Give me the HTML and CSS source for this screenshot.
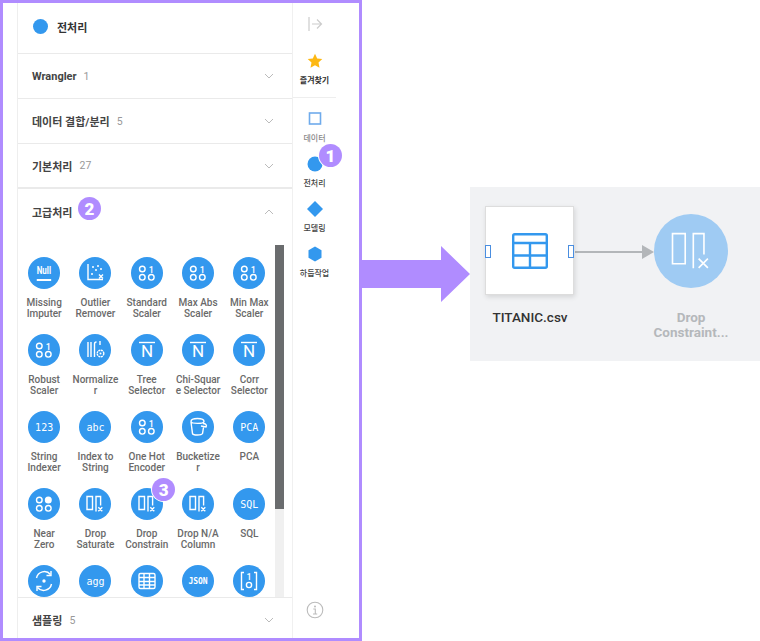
FILE: index.html
```html
<!DOCTYPE html>
<html lang="ko">

<head>
    <meta charset="UTF-8">
    <meta name="viewport" content="width=device-width, initial-scale=1.0">
    <title>전처리</title>
    <link rel="stylesheet" href="styles.css">
</head>

<body>
    <!-- icon set -->
    <svg class="defs" aria-hidden="true">
        <symbol id="bin" viewBox="0 0 32 32">
            <g class="ln"><circle cx="11.300" cy="12" r="2.800"/><circle cx="11.300" cy="20.300" r="2.800"/><circle cx="20.300" cy="20.300" r="2.800"/></g>
            <text x="20.300" y="15.500" class="gl">1</text>
        </symbol>
        <symbol id="near" viewBox="0 0 32 32">
            <g class="ln"><circle cx="11.300" cy="20.300" r="2.800"/><circle cx="20.300" cy="20.300" r="2.800"/><circle cx="11.300" cy="12" r="2.800"/></g>
            <circle cx="20.300" cy="12" r="3.500" fill="#fff"/>
        </symbol>
        <symbol id="outlier" viewBox="0 0 32 32">
            <path class="ln" d="M9 7v15.500h15"/>
            <g fill="#fff"><circle cx="14" cy="10" r="1"/><circle cx="19" cy="9" r="1"/><circle cx="17" cy="13" r="1"/><circle cx="22" cy="12" r="1"/><circle cx="13" cy="17" r="1"/></g>
            <path class="ln" d="M20 17.500l4 4m0-4l-4 4"/>
        </symbol>
        <symbol id="normal" viewBox="0 0 32 32">
            <path class="ln" d="M9 8v15M12 8v15M15.500 23V10a2 2 0 0 1 2-2M21 7v4"/>
            <circle class="ln" cx="21.500" cy="19.500" r="3.300" stroke-dasharray="2 .6"/>
            <circle cx="21.500" cy="19.500" r="1" fill="#fff"/>
        </symbol>
        <symbol id="over" viewBox="0 0 32 32">
            <path class="ln" d="M8 8.500h16"/>
            <text x="16" y="23" class="gl big">N</text>
        </symbol>
        <symbol id="bucket" viewBox="0 0 32 32">
            <path class="ln" d="M9 10.500c0-4 13-4 13 0 0 2.500-13 2.500-13 0zM9 11l1.500 11.500c.5 2 9 2 10 0l1-6M21 12.500c3 0 4 2 3 3.500l-5-1"/>
        </symbol>
        <symbol id="drop" viewBox="0 0 32 32">
            <path class="ln" d="M8 8.500h5.500v13H8zM17 23.500V8.500h4.600v9"/>
            <path class="ln" d="M19.300 19.300l4 4m0-4l-4 4"/>
        </symbol>
        <symbol id="sync" viewBox="0 0 32 32">
            <path class="ln" d="M8.500 13a8 8 0 0 1 14-3.500M23.500 19a8 8 0 0 1-14 3.500"/>
            <path class="ln" d="M23 6v4.500h-4.500M9 26v-4.500h4.500"/>
            <circle cx="16" cy="16" r="1.700" fill="#fff"/>
        </symbol>
        <symbol id="sheet" viewBox="0 0 32 32">
            <rect class="ln" x="8" y="8.500" width="16" height="15" rx="1.500"/>
            <path class="ln" d="M8 12.500h16M8 16.500h16M8 20h16M13 8.500v15M18.500 8.500v15"/>
        </symbol>
        <symbol id="bracket" viewBox="0 0 32 32">
            <path class="ln" d="M11 7.500H8.500v17H11M21 7.500h2.500v17H21"/>
            <text x="16" y="15" class="gl">1</text>
            <circle class="ln" cx="16" cy="20" r="2.600"/>
        </symbol>
    </svg>

    <div class="page">
        <div class="frame">
            <div class="panel">
                <div class="panel-head">
                    <span class="dot"></span>
                    <span class="head-title">전처리</span>
                </div>

                <div class="section">
                    <span class="sec-title">Wrangler</span><span class="sec-count">1</span>
                    <svg class="chev" viewBox="0 0 10 6"><path d="M1 1l4 4 4-4"/></svg>
                </div>
                <div class="section">
                    <span class="sec-title">데이터 결합/분리</span><span class="sec-count">5</span>
                    <svg class="chev" viewBox="0 0 10 6"><path d="M1 1l4 4 4-4"/></svg>
                </div>
                <div class="section thick">
                    <span class="sec-title">기본처리</span><span class="sec-count">27</span>
                    <svg class="chev" viewBox="0 0 10 6"><path d="M1 1l4 4 4-4"/></svg>
                </div>
                <div class="section open">
                    <span class="sec-title">고급처리</span>
                    <span class="badge badge-two">2</span>
                    <svg class="chev" viewBox="0 0 10 6"><path d="M1 5l4-4 4 4"/></svg>
                </div>

                <div class="tool-scroll">
                    <div class="tool-grid">
                        <div class="tool"><span class="tool-ico"><span class="null-txt">Null</span></span><span class="tool-name">Missing<br>Imputer</span></div>
                        <div class="tool"><span class="tool-ico"><svg><use href="#outlier"/></svg></span><span class="tool-name">Outlier<br>Remover</span></div>
                        <div class="tool"><span class="tool-ico"><svg><use href="#bin"/></svg></span><span class="tool-name">Standard<br>Scaler</span></div>
                        <div class="tool"><span class="tool-ico"><svg><use href="#bin"/></svg></span><span class="tool-name">Max Abs<br>Scaler</span></div>
                        <div class="tool"><span class="tool-ico"><svg><use href="#bin"/></svg></span><span class="tool-name">Min Max<br>Scaler</span></div>

                        <div class="tool"><span class="tool-ico"><svg><use href="#bin"/></svg></span><span class="tool-name">Robust<br>Scaler</span></div>
                        <div class="tool"><span class="tool-ico"><svg><use href="#normal"/></svg></span><span class="tool-name">Normalize<br>r</span></div>
                        <div class="tool"><span class="tool-ico"><svg><use href="#over"/></svg></span><span class="tool-name">Tree<br>Selector</span></div>
                        <div class="tool"><span class="tool-ico"><svg><use href="#over"/></svg></span><span class="tool-name">Chi-Squar<br>e Selector</span></div>
                        <div class="tool"><span class="tool-ico"><svg><use href="#over"/></svg></span><span class="tool-name">Corr<br>Selector</span></div>

                        <div class="tool"><span class="tool-ico mono">123</span><span class="tool-name">String<br>Indexer</span></div>
                        <div class="tool"><span class="tool-ico mono">abc</span><span class="tool-name">Index to<br>String</span></div>
                        <div class="tool"><span class="tool-ico"><svg><use href="#bin"/></svg></span><span class="tool-name">One Hot<br>Encoder</span></div>
                        <div class="tool"><span class="tool-ico"><svg><use href="#bucket"/></svg></span><span class="tool-name">Bucketize<br>r</span></div>
                        <div class="tool"><span class="tool-ico mono">PCA</span><span class="tool-name">PCA</span></div>

                        <div class="tool"><span class="tool-ico"><svg><use href="#near"/></svg></span><span class="tool-name">Near<br>Zero</span></div>
                        <div class="tool"><span class="tool-ico"><svg><use href="#drop"/></svg></span><span class="tool-name">Drop<br>Saturate</span></div>
                        <div class="tool"><span class="tool-ico"><svg><use href="#drop"/></svg></span><span class="tool-name">Drop<br>Constrain</span><span class="badge badge-three">3</span></div>
                        <div class="tool"><span class="tool-ico"><svg><use href="#drop"/></svg></span><span class="tool-name">Drop N/A<br>Column</span></div>
                        <div class="tool"><span class="tool-ico mono">SQL</span><span class="tool-name">SQL</span></div>

                        <div class="tool"><span class="tool-ico"><svg><use href="#sync"/></svg></span></div>
                        <div class="tool"><span class="tool-ico mono">agg</span></div>
                        <div class="tool"><span class="tool-ico"><svg><use href="#sheet"/></svg></span></div>
                        <div class="tool"><span class="tool-ico mono small">JSON</span></div>
                        <div class="tool"><span class="tool-ico"><svg><use href="#bracket"/></svg></span></div>
                    </div>
                    <div class="scrollbar"><div class="thumb"></div></div>
                </div>

                <div class="section last">
                    <span class="sec-title">샘플링</span><span class="sec-count">5</span>
                    <svg class="chev" viewBox="0 0 10 6"><path d="M1 1l4 4 4-4"/></svg>
                </div>
            </div>

            <div class="rail">
                <svg class="rail-toggle" viewBox="0 0 16 16"><path d="M2 1v14M5 8h9.500M10 3.500L14.500 8 10 12.500"/></svg>

                <div class="rail-item fav">
                    <svg class="rail-ico" viewBox="0 0 16 16"><path fill="#fdb813" d="M8 .8l2.200 4.700 5.100.6-3.800 3.500 1 5.100L8 12.200l-4.500 2.500 1-5.100L.7 6.100l5.100-.6z"/></svg>
                    <span class="rail-name strong">즐겨찾기</span>
                </div>
                <div class="rail-item">
                    <svg class="rail-ico" viewBox="0 0 16 16"><rect x="2.500" y="2" width="11" height="11" fill="none" stroke="#6fabec" stroke-width="1.600"/></svg>
                    <span class="rail-name dim">데이터</span>
                </div>
                <div class="rail-item">
                    <svg class="rail-ico" viewBox="0 0 16 16"><circle cx="8" cy="8" r="7.500" fill="#3398ee"/></svg>
                    <span class="rail-name">전처리</span>
                    <span class="badge badge-one">1</span>
                </div>
                <div class="rail-item">
                    <svg class="rail-ico" viewBox="0 0 16 16"><path fill="#3398ee" d="M8 0l8 8-8 8-8-8z"/></svg>
                    <span class="rail-name">모델링</span>
                </div>
                <div class="rail-item">
                    <svg class="rail-ico" viewBox="0 0 16 16"><path fill="#3398ee" d="M8 .5l6.500 3.700v7.600L8 15.500l-6.500-3.700V4.200z"/></svg>
                    <span class="rail-name">하둡작업</span>
                </div>

                <svg class="rail-info" viewBox="0 0 18 18">
                    <circle cx="9" cy="9" r="7.800"/>
                    <path d="M7.300 8h2v5M7 13h4.200"/>
                    <circle class="pt" cx="9" cy="5.400" r="1"/>
                </svg>
            </div>
        </div>

        <div class="flow">
            <svg class="big-arrow" viewBox="0 0 108 56"><path fill="#b08cff" d="M0 14h79V0l29 28-29 28V42H0z"/></svg>

            <div class="canvas">
                <svg class="link" viewBox="0 0 290 174"><path d="M105 65h68" stroke="#b3b6b9" stroke-width="2" fill="none"/><path d="M172 58l12 7-12 7z" fill="#b3b6b9"/></svg>

                <div class="node-box">
                    <svg class="node-table" viewBox="0 0 36 36">
                        <rect x="1.200" y="1.200" width="33.600" height="33.600" rx="1.500"/>
                        <path d="M1 10h34M1 22.500h34M18 10v25"/>
                    </svg>
                    <span class="port port-in"></span>
                    <span class="port port-out"></span>
                </div>
                <div class="node-name">TITANIC.csv</div>

                <div class="node-circle">
                    <svg viewBox="0 0 32 32"><use href="#drop"/></svg>
                </div>
                <div class="node-name faded">Drop<br>Constraint...</div>
            </div>
        </div>
    </div>
</body>

</html>
```

FILE: styles.css
```css
body {
    margin: 0;
    background-color: white;
    font-family: Roboto, 'Noto Sans CJK KR', sans-serif;
    color: #444;
}

.defs {
    display: none;
}

.ln {
    fill: none;
    stroke: #fff;
    stroke-width: var(--line, 1.4);
}

.gl {
    fill: #fff;
    font-family: Roboto, sans-serif;
    font-size: 9px;
    font-weight: 500;
    text-anchor: middle;
}

.gl.big {
    font-size: 17px;
    font-weight: 400;
}

.page {
    display: flex;
    width: 760px;
    height: 641px;
    overflow: hidden;
}

/* left part with purple outline */
.frame {
    display: flex;
    flex: 0 0 362px;
    box-sizing: border-box;
    height: 641px;
    padding-left: 14px;
    border: 3px solid #b08cff;
}

.panel {
    display: flex;
    flex-direction: column;
    flex: 0 0 275px;
    box-sizing: border-box;
    border-left: 1px solid #eee;
    overflow: hidden;
}

.panel-head {
    display: flex;
    flex: 0 0 51px;
    box-sizing: border-box;
    align-items: center;
    padding: 0 0 3px 15px;
    border-bottom: 1px solid #eaeaea;
}

.dot {
    width: 15px;
    height: 15px;
    border-radius: 50%;
    background-color: #3398ee;
}

.head-title {
    margin-left: 9px;
    font-size: 11px;
    font-weight: 700;
    color: #333;
}

.section {
    position: relative;
    display: flex;
    flex: 0 0 45px;
    box-sizing: border-box;
    align-items: center;
    padding: 0 14px;
    border-bottom: 1px solid #eaeaea;
}

.section.thick {
    border-bottom-width: 2px;
}

.section.open {
    border-bottom: none;
}

.section.last {
    border-top: 1px solid #eaeaea;
    border-bottom: none;
}

.sec-title {
    font-size: 11px;
    font-weight: 700;
    color: #444;
}

.sec-count {
    margin-left: 7px;
    font-size: 10.500px;
    color: #999;
}

.chev {
    width: 10px;
    height: 6px;
    margin-left: auto;
    margin-right: 4px;
    fill: none;
    stroke: #bbb;
    stroke-width: 1;
}

.tool-scroll {
    display: flex;
    flex: 0 0 363px;
    overflow: hidden;
}

.tool-grid {
    display: grid;
    flex: 0 0 257px;
    grid-template-columns: repeat(5, 51.300px);
    grid-auto-rows: 62px;
    row-gap: 15px;
    align-content: start;
    box-sizing: border-box;
    padding: 23px 0 0 0.500px;
}

.tool {
    position: relative;
    display: flex;
    flex-direction: column;
    align-items: center;
}

.tool-ico {
    display: flex;
    flex: 0 0 32px;
    align-items: center;
    justify-content: center;
    width: 32px;
    height: 32px;
    border-radius: 50%;
    background-color: #3398ee;
    color: white;
}

.tool-ico svg {
    width: 32px;
    height: 32px;
}

.tool-ico.mono {
    font-family: 'DejaVu Sans Mono', monospace;
    font-size: 10px;
}

.tool-ico.mono.small {
    font-size: 8px;
    font-weight: 700;
}

.null-txt {
    margin-top: -1px;
    padding-bottom: 2px;
    border-bottom: 2px solid white;
    font-size: 11px;
    font-weight: 700;
    line-height: 12px;
    transform: scaleX(0.72);
}

.tool-name {
    margin-top: 8px;
    font-size: 10px;
    font-weight: 500;
    line-height: 11px;
    color: #6a6a6a;
    text-align: center;
    white-space: nowrap;
}

.scrollbar {
    flex: 0 0 9px;
    margin-top: 11px;
    background-color: #f0f0f0;
}

.thumb {
    height: 264px;
    background-color: #6a6c6e;
}

.rail {
    position: relative;
    display: flex;
    flex-direction: column;
    flex: 0 0 67px;
    box-sizing: border-box;
    border-left: 1px solid #f0f0f0;
}

.rail-toggle {
    flex: 0 0 16px;
    width: 16px;
    height: 16px;
    margin: 13px 0 21px 14px;
    fill: none;
    stroke: #ccc;
    stroke-width: 1.200;
}

.rail-item {
    position: relative;
    display: flex;
    flex-direction: column;
    flex: 0 0 45px;
    box-sizing: border-box;
    align-items: center;
    width: 43px;
}

.rail-item.fav {
    margin-bottom: 13px;
    border-bottom: 1px solid #eee;
}

.rail-ico {
    flex: 0 0 16px;
    width: 16px;
    height: 16px;
}

.rail-name {
    margin-top: 6px;
    font-size: 8px;
    font-weight: 500;
    line-height: 12px;
    color: #444;
    white-space: nowrap;
}

.rail-name.strong {
    font-weight: 700;
    color: #333;
}

.rail-name.dim {
    color: #888;
}

.rail-info {
    flex: 0 0 18px;
    width: 18px;
    height: 18px;
    margin: auto 0 19px 13px;
    fill: none;
    stroke: #bbb;
    stroke-width: 1.100;
}

.rail-info .pt {
    fill: #bbb;
    stroke: none;
}

/* numbered callouts */
.badge {
    position: absolute;
    display: flex;
    align-items: center;
    justify-content: center;
    width: 23px;
    height: 23px;
    border-radius: 50%;
    background-color: #b08cff;
    box-shadow: 0 0 0 1px white;
    color: white;
    font-size: 17px;
    font-weight: 900;
}

.badge-one {
    left: 26px;
    top: -12px;
}

.badge-two {
    left: 60px;
    top: 8px;
}

.badge-three {
    left: 31px;
    top: -10px;
}

/* right part with the arrow and the graph */
.flow {
    display: flex;
    flex: 1;
    align-items: center;
    height: 174px;
    margin-top: 187px;
}

.big-arrow {
    flex: 0 0 108px;
    width: 108px;
    height: 56px;
}

.canvas {
    position: relative;
    flex: 1;
    height: 174px;
    background-color: #f1f2f4;
}

.link {
    position: absolute;
    left: 0;
    top: 0;
    width: 290px;
    height: 174px;
}

.node-box {
    position: absolute;
    left: 15px;
    top: 19px;
    display: flex;
    align-items: center;
    justify-content: center;
    box-sizing: border-box;
    width: 89px;
    height: 89px;
    border: 1px solid #ddd;
    background-color: white;
    box-shadow: 1px 2px 5px rgba(0, 0, 0, 0.12);
}

.node-table {
    width: 36px;
    height: 36px;
    fill: none;
    stroke: #3398ee;
    stroke-width: 2.400;
}

.port {
    position: absolute;
    top: 38px;
    box-sizing: border-box;
    width: 6px;
    height: 13px;
    border: 1px solid #4a8ee0;
    background-color: white;
}

.port-in {
    left: -1px;
}

.port-out {
    right: -1px;
}

.node-name {
    position: absolute;
    left: 0;
    top: 123px;
    width: 120px;
    font-size: 13.500px;
    font-weight: 500;
    line-height: 15px;
    color: #333;
    text-align: center;
}

.node-name.faded {
    left: 161px;
    font-weight: 700;
    color: #b5b8bb;
}

.node-circle {
    --line: 0.7;
    position: absolute;
    left: 184px;
    top: 27px;
    width: 74px;
    height: 74px;
    border-radius: 50%;
    background-color: #9fcbf3;
}

.node-circle svg {
    display: block;
    width: 74px;
    height: 74px;
}
```
